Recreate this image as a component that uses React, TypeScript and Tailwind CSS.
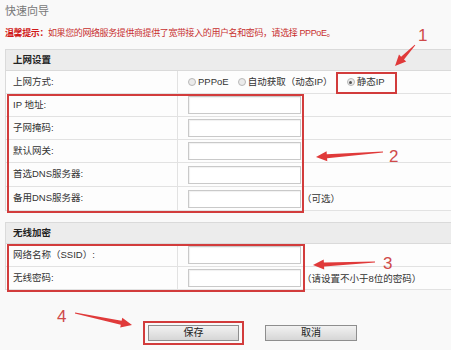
import React from 'react';

const FONT = '"Liberation Sans", "Noto Sans CJK SC", sans-serif';

// tapered red arrow (thin tail, fat head) like the hand-drawn annotations
const Arrow: React.FC<{ x1: number; y1: number; x2: number; y2: number }> = ({ x1, y1, x2, y2 }) => {
  const dx = x2 - x1;
  const dy = y2 - y1;
  const len = Math.hypot(dx, dy);
  const ux = dx / len;
  const uy = dy / len;
  const nx = -uy;
  const ny = ux;
  const head = 11;
  const hw = 5;
  const bx = x2 - ux * head;
  const by = y2 - uy * head;
  const pts = [
    [x1 + nx * 0.4, y1 + ny * 0.4],
    [bx + nx * 2, by + ny * 2],
    [bx + nx * hw, by + ny * hw],
    [x2, y2],
    [bx - nx * hw, by - ny * hw],
    [bx - nx * 2, by - ny * 2],
    [x1 - nx * 0.4, y1 - ny * 0.4],
  ]
    .map((p) => p.map((v) => v.toFixed(1)).join(','))
    .join(' ');
  return <polygon points={pts} fill="#e03a3a" />;
};

const Radio: React.FC<{ checked?: boolean; label: string; className?: string }> = ({ checked, label, className = '' }) => (
  <div className={`flex items-center gap-[2px] ${className}`}>
    <span className="w-[8px] h-[8px] rounded-full border border-[#b8b8b8] bg-[#ebebeb] flex items-center justify-center">
      {checked && <span className="w-[3px] h-[3px] rounded-full bg-[#555]" />}
    </span>
    <span>{label}</span>
  </div>
);

const Input: React.FC = () => (
  <div className="w-[113px] h-[18px] border border-[#c9c9c9] bg-white shadow-[inset_1px_1px_1px_rgba(0,0,0,0.06)]" />
);

const Row: React.FC<{ label: string; h?: string; children?: React.ReactNode }> = ({ label, h = 'h-[23px]', children }) => (
  <div className={`flex ${h} border-b border-[#e2e2e2]`}>
    <div className="w-[172px] pl-[7px] flex items-center border-r border-[#e2e2e2]">{label}</div>
    <div className="flex-1 pl-[10px] flex items-center">{children}</div>
  </div>
);

const SectionHead: React.FC<{ title: string }> = ({ title }) => (
  <div className="h-[22px] bg-[#ececec] border-y border-[#dadada] pl-[7px] flex items-center text-[#222] font-bold">
    {title}
  </div>
);

export default function App() {
  return (
    <div
      className="w-[451px] h-[350px] bg-[#f9f9f9] relative overflow-hidden text-[9.5px] text-[#333]"
      style={{ fontFamily: FONT }}
    >
      <div className="pl-[5px] pt-[4px]">
        <div className="h-[14px] leading-[14px] text-[11px] text-[#777]">快速向导</div>
        <div className="mt-[9px] h-[12px] leading-[12px] text-[9px] tracking-[-0.4px] text-[#c8302f] whitespace-nowrap">
          <span className="font-bold text-[#d11a1a]">温馨提示：</span>
          如果您的网络服务提供商提供了宽带接入的用户名和密码，请选择 PPPoE。
        </div>

        <div className="mt-[10px] bg-[#fdfdfd] border-l border-[#dadada]">
          <SectionHead title="上网设置" />
          <Row label="上网方式:">
            <div className="flex items-center">
              <Radio label="PPPoE" />
              <Radio label="自动获取（动态IP）" className="ml-[9px]" />
              <Radio checked label="静态IP" className="ml-[14px]" />
            </div>
          </Row>
          <Row label="IP 地址:">
            <Input />
          </Row>
          <Row label="子网掩码:">
            <Input />
          </Row>
          <Row label="默认网关:">
            <Input />
          </Row>
          <Row label="首选DNS服务器:" h="h-[24px]">
            <Input />
          </Row>
          <Row label="备用DNS服务器:" h="h-[24px]">
            <Input />
            <span className="ml-[1px] leading-[11px]">（可选）</span>
          </Row>
        </div>

        <div className="mt-[11px] bg-[#fdfdfd] border-l border-[#dadada]">
          <SectionHead title="无线加密" />
          <Row label="网络名称（SSID）:">
            <Input />
          </Row>
          <Row label="无线密码:">
            <Input />
            <span className="ml-[1px] leading-[11px]">（请设置不小于8位的密码）</span>
          </Row>
        </div>

        <div className="mt-[35px] pl-[143px] flex gap-[26px]">
          <button className="w-[91px] h-[16px] border border-[#8e8e8e] bg-gradient-to-b from-[#f2f2f2] to-[#d6d6d6] text-[10px] leading-[14px] text-[#222]">
            保存
          </button>
          <button className="w-[92px] h-[16px] border border-[#8e8e8e] bg-gradient-to-b from-[#f2f2f2] to-[#d6d6d6] text-[10px] leading-[14px] text-[#222]">
            取消
          </button>
        </div>
      </div>

      {/* annotations */}
      <div className="absolute left-[336px] top-[72px] w-[61px] h-[22px] border-2 border-[#d23c3c]" />
      <div className="absolute left-[7px] top-[94px] w-[297px] h-[119px] border-2 border-[#d23c3c]" />
      <div className="absolute left-[7px] top-[244px] w-[298px] h-[48px] border-2 border-[#d23c3c]" />
      <div className="absolute left-[143px] top-[321px] w-[101px] h-[24px] border-2 border-[#d23c3c]" />

      <svg className="absolute inset-0 pointer-events-none" width="451" height="350">
        <Arrow x1={415} y1={45} x2={395} y2={66} />
        <Arrow x1={383} y1={152} x2={316} y2={157} />
        <Arrow x1={375} y1={262} x2={313} y2={265} />
        <Arrow x1={75} y1={313} x2={132} y2={325} />
      </svg>
      <span className="absolute left-[418px] top-[30px] text-[17px] leading-[12px] text-[#cf4a4a]">1</span>
      <span className="absolute left-[389px] top-[150px] text-[17px] leading-[13px] text-[#cf4a4a]">2</span>
      <span className="absolute left-[383px] top-[258px] text-[17px] leading-[12px] text-[#cf4a4a]">3</span>
      <span className="absolute left-[57px] top-[310px] text-[17px] leading-[13px] text-[#cf4a4a]">4</span>
    </div>
  );
}
